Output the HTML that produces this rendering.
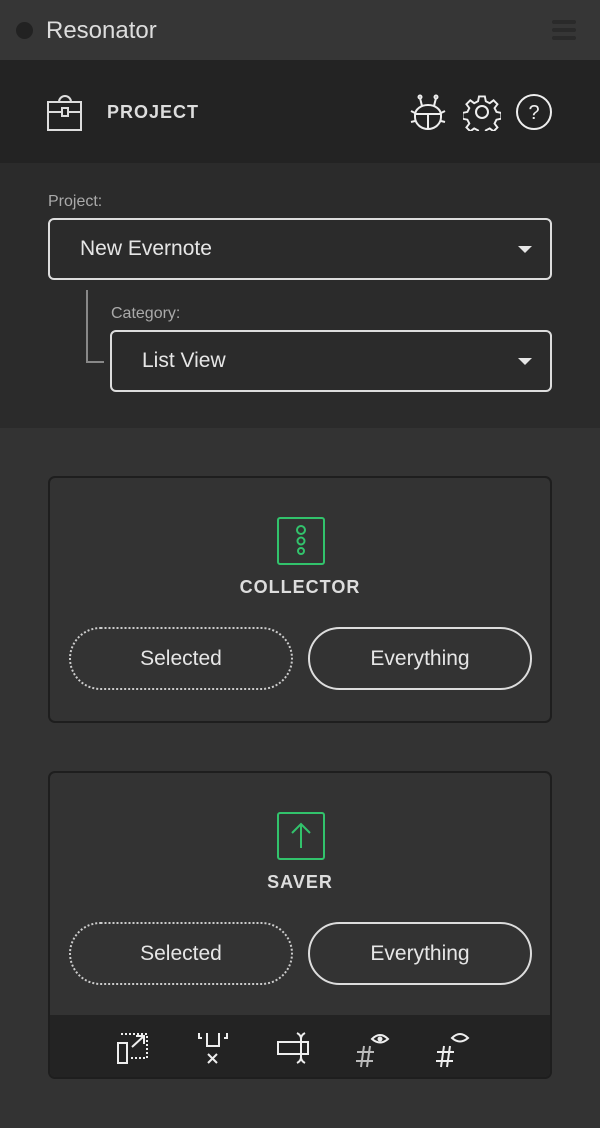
<!DOCTYPE html>
<html><head><meta charset="utf-8"><style>
*{box-sizing:border-box;margin:0;padding:0}
body{width:600px;height:1128px;background:#333;font-family:"Liberation Sans",sans-serif;color:#ddd;position:relative;overflow:hidden}
.a{position:absolute}
.sel{position:absolute;border:2px solid #ddd;border-radius:6px;height:62px;font-size:21px;line-height:58px;padding-left:30px;color:#e6e6e6}
.sel:after{content:"";position:absolute;right:18px;top:26px;border-left:7px solid transparent;border-right:7px solid transparent;border-top:7px solid #e6e6e6}
.lbl{position:absolute;font-size:16px;color:#aaa}
.card{position:absolute;left:48px;width:504px;border:2px solid #1e1e1e;border-radius:7px;overflow:hidden}
.btn{position:absolute;width:224px;height:63px;border-radius:32px;font-size:21px;text-align:center;line-height:59px;color:#e6e6e6}
.t{font-weight:bold;font-size:18px;letter-spacing:1px;position:absolute;width:100%;text-align:center;color:#ddd}
</style></head><body>
<div class="a" style="left:0;top:0;width:600px;height:60px;background:#363636"></div>
<div class="a" style="left:16px;top:22px;width:17px;height:17px;border-radius:50%;background:#222"></div>
<div class="a" style="left:46px;top:17px;font-size:24px;color:#ddd">Resonator</div>
<div class="a" style="left:552px;top:20px;width:24px;height:4px;background:#2a2a2a;border-radius:2px;box-shadow:0 8px 0 #2a2a2a,0 16px 0 #2a2a2a"></div>
<div class="a" style="left:0;top:60px;width:600px;height:103px;background:#232323"></div>
<svg class="a" style="left:46px;top:90px" width="38" height="42" viewBox="0 0 38 42" fill="none" stroke="#ddd" stroke-width="2"><rect x="2" y="12" width="33" height="28"/><path d="M2 22H16M22 22H35M13 12a6 6 0 0 1 12 0"/><rect x="16" y="18" width="6" height="8"/></svg>
<div class="a" style="left:107px;top:102px;font-weight:bold;font-size:18px;letter-spacing:1px;color:#ddd">PROJECT</div>
<svg class="a" style="left:408px;top:92px" width="40" height="40" viewBox="0 0 40 40" fill="none" stroke="#eee" stroke-width="2"><path d="M7 23a13 10 0 0 1 26 0v2a13 12 0 0 1-26 0z"/><path d="M7 22H33M20 22V37M14 14L12 6M26 14L28 6M7 21L3 19M7 29L3 30M33 21L37 19M33 29L37 30"/><circle cx="12" cy="5" r="1.5"/><circle cx="28" cy="5" r="1.5"/></svg>
<svg class="a" style="left:463px;top:93px" width="38" height="38" viewBox="0 0 38 38" fill="none" stroke="#eee" stroke-width="2"><path d="M16 3h6l1 5 4 2 4-3 4 4-3 4 2 4 5 1v6l-5 1-2 4 3 4-4 4-4-3-4 2-1 5h-6l-1-5-4-2-4 3-4-4 3-4-2-4-5-1v-6l5-1 2-4-3-4 4-4 4 3 4-2z" transform="translate(0.5 0.5) scale(0.97)"/><circle cx="19" cy="19" r="6"/></svg>
<svg class="a" style="left:515px;top:93px" width="38" height="38" viewBox="0 0 38 38" fill="none" stroke="#eee" stroke-width="2"><circle cx="19" cy="19" r="17"/><text x="19" y="26" fill="#eee" stroke="none" font-size="20" text-anchor="middle" font-family="Liberation Sans">?</text></svg>
<div class="a" style="left:0;top:163px;width:600px;height:265px;background:#2b2b2b"></div>
<div class="lbl" style="left:48px;top:193px">Project:</div>
<div class="sel" style="left:48px;top:218px;width:504px">New Evernote</div>
<div class="a" style="left:86px;top:290px;width:18px;height:73px;border-left:2px solid #888;border-bottom:2px solid #888"></div>
<div class="lbl" style="left:111px;top:305px">Category:</div>
<div class="sel" style="left:110px;top:330px;width:442px">List View</div>

<div class="card" style="top:476px;height:247px">
<svg class="a" style="left:226px;top:38px" width="50" height="50" viewBox="0 0 50 50" fill="none" stroke="#32c36c" stroke-width="2"><rect x="2" y="2" width="46" height="46" rx="2"/><circle cx="25" cy="14" r="4"/><circle cx="25" cy="25" r="3.5"/><circle cx="25" cy="35" r="3"/></svg>
<div class="t" style="top:99px">COLLECTOR</div>
<div class="btn" style="left:19px;top:149px;border:2px dotted #ccc">Selected</div>
<div class="btn" style="left:258px;top:149px;border:2px solid #ddd">Everything</div>
</div>

<div class="card" style="top:771px;height:308px">
<svg class="a" style="left:226px;top:38px" width="50" height="50" viewBox="0 0 50 50" fill="none" stroke="#32c36c" stroke-width="2"><rect x="2" y="2" width="46" height="46" rx="2"/><path d="M25 37V14M16 22L25 13L34 22"/></svg>
<div class="t" style="top:99px">SAVER</div>
<div class="btn" style="left:19px;top:149px;border:2px dotted #ccc">Selected</div>
<div class="btn" style="left:258px;top:149px;border:2px solid #ddd">Everything</div>
<div class="a" style="left:0;top:242px;width:504px;height:64px;background:#232323"></div>
<svg class="a" style="left:66px;top:258px" width="36" height="36" viewBox="0 0 36 36" fill="none" stroke="#eee" stroke-width="2"><rect x="2" y="12" width="9" height="20"/><path d="M5 3H31V27H13" stroke-dasharray="2 2"/><path d="M16 16L28 5M20 5H28V13"/></svg>
<svg class="a" style="left:146px;top:258px" width="36" height="36" viewBox="0 0 36 36" fill="none" stroke="#eee" stroke-width="2"><path d="M3 2V7H6M11 2V15H23V2M31 2V7H28M12 23L21 32M21 23L12 32"/></svg>
<svg class="a" style="left:226px;top:258px" width="36" height="36" viewBox="0 0 36 36" fill="none" stroke="#eee" stroke-width="2"><rect x="2" y="11" width="30" height="12"/><path d="M21 2Q25 4 25 8Q25 4 29 2M25 8V26M21 32Q25 30 25 26Q25 30 29 32"/></svg>
<svg class="a" style="left:306px;top:256px" width="40" height="40" viewBox="0 0 40 40" fill="none" stroke="#eee" stroke-width="2"><path d="M8 17L5 38M14 17L11 38M1 23H18M0 32H17" stroke="#bbb"/><path d="M16 10Q24 2 32 10Q24 17 16 10Z"/><circle cx="24" cy="10" r="1.5" fill="#eee"/></svg>
<svg class="a" style="left:386px;top:256px" width="40" height="40" viewBox="0 0 40 40" fill="none" stroke="#eee" stroke-width="2"><path d="M8 17L5 38M14 17L11 38M1 23H18M0 32H17"/><path d="M16 9Q24 1 32 9Q24 16 16 9Z"/></svg>
</div>
</body></html>
